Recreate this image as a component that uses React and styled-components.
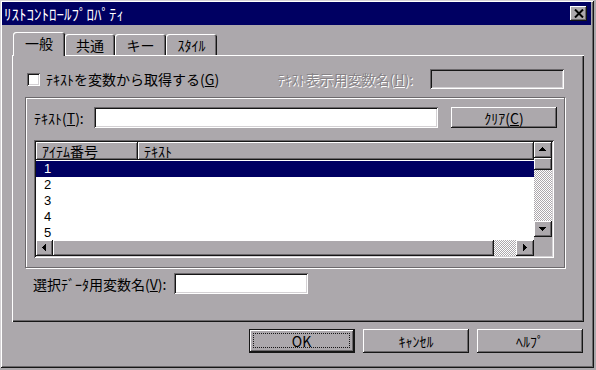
import React from 'react';
import styled, { createGlobalStyle } from 'styled-components';

const C = {
  face: '#aca8ac',
  light: '#d4d1d4',
  hi: '#ffffff',
  shadow: '#6b686b',
  dark: '#161616',
  navy: '#000062',
  grayText: '#878387',
};

const raised = `box-shadow: inset -1px -1px ${C.dark}, inset 1px 1px ${C.hi}, inset -2px -2px ${C.shadow};`;
const sunken = `box-shadow: inset 1px 1px ${C.shadow}, inset -1px -1px ${C.hi}, inset 2px 2px ${C.dark}, inset -2px -2px ${C.light};`;

const GlobalStyle = createGlobalStyle`
  html, body {
    margin: 0;
    padding: 0;
    background: ${C.face};
  }
  body {
    font-family: "Noto Sans CJK JP", "Noto Sans", sans-serif;
    font-size: 14px;
    color: #000;
  }
  u { text-underline-offset: 1px; }
`;

const Win = styled.div`
  width: 594px;
  height: 368px;
  box-sizing: border-box;
  padding: 2px 3px 3px 2px;
  background: ${C.face};
  box-shadow: inset 1px 1px ${C.light}, inset -1px -1px ${C.dark}, inset 2px 2px ${C.hi}, inset -2px -2px ${C.shadow};
  display: flex;
  flex-direction: column;
`;

const TitleBar = styled.div`
  height: 23px;
  background: ${C.navy};
  display: flex;
  align-items: center;
  justify-content: space-between;
  padding: 0 4px 0 2px;
`;

const Title = styled.span`
  color: #fff;
  font-size: 15px;
  line-height: 23px;
  white-space: nowrap;
`;

const CloseBtn = styled.div`
  width: 17px;
  height: 15px;
  background: ${C.face};
  ${raised}
  display: flex;
  align-items: center;
  justify-content: center;
`;

const Body = styled.div`
  flex: 1;
  display: flex;
  flex-direction: column;
  padding: 7px 7px 0 10px;
`;

const TabRow = styled.div`
  display: flex;
  align-items: flex-end;
  height: 24px;
  padding-left: 1px;
  position: relative;
  z-index: 1;
`;

const Tab = styled.div`
  width: ${p => p.$w}px;
  height: ${p => (p.$active ? 24 : 21)}px;
  margin-bottom: ${p => (p.$active ? 0 : 1)}px;
  box-sizing: border-box;
  background: ${C.face};
  border-radius: 3px 3px 0 0;
  box-shadow: inset 1px 1px ${C.hi}, inset -1px 0 ${C.dark}, inset -2px 0 ${C.shadow};
  display: flex;
  align-items: center;
  justify-content: center;
  padding-bottom: ${p => (p.$active ? 2 : 0)}px;
  font-size: 14px;
  white-space: nowrap;
`;

const Panel = styled.div`
  margin-top: -1px;
  height: 267px;
  box-sizing: border-box;
  background: ${C.face};
  box-shadow: inset 1px 1px ${C.hi}, inset -1px -1px ${C.dark}, inset -2px -2px ${C.shadow};
  padding: 14px 19px 0 13px;
  display: flex;
  flex-direction: column;
`;

const TopRow = styled.div`
  display: flex;
  align-items: center;
  height: 20px;
  padding: 0 1px 0 2px;
`;

const CheckLabel = styled.label`
  display: flex;
  align-items: center;
  gap: 6px;
  white-space: nowrap;
`;

const CheckBox = styled.span`
  width: 13px;
  height: 13px;
  flex: none;
  background: #fff;
  ${sunken}
`;

const DisabledGroup = styled.div`
  margin-left: auto;
  display: flex;
  align-items: center;
  gap: 17px;
`;

const DisabledText = styled.span`
  color: ${C.grayText};
  text-shadow: 1px 1px ${C.hi};
  white-space: nowrap;
`;

const Field = styled.div`
  width: ${p => p.$w}px;
  height: ${p => p.$h || 21}px;
  flex: none;
  background: ${p => (p.$disabled ? C.face : '#fff')};
  ${sunken}
`;

const GroupBox = styled.div`
  margin-top: 8px;
  height: 171px;
  box-sizing: border-box;
  border: 1px solid ${C.shadow};
  box-shadow: inset 1px 1px ${C.hi}, 1px 1px ${C.hi};
  padding: 9px 0 0 7px;
  display: flex;
  flex-direction: column;
`;

const FieldRow = styled.div`
  display: flex;
  align-items: center;
  height: 21px;
  padding-left: ${p => p.$pad || 0}px;
`;

const Label = styled.span`
  width: ${p => p.$w}px;
  flex: none;
  white-space: nowrap;
`;

const Button = styled.div`
  width: ${p => p.$w || 106}px;
  height: ${p => p.$h || 24}px;
  box-sizing: border-box;
  margin-left: ${p => p.$ml || 0}px;
  background: ${C.face};
  ${raised}
  display: flex;
  align-items: center;
  justify-content: center;
  white-space: nowrap;
  font-size: 14px;
`;

const DefaultButton = styled.div`
  width: 106px;
  height: 24px;
  box-sizing: border-box;
  border: 1px solid ${C.dark};
  background: ${C.face};
  box-shadow: inset -1px -1px ${C.dark}, inset 1px 1px ${C.hi}, inset -2px -2px ${C.shadow};
  padding: 3px 4px 4px 3px;
  display: flex;
`;

const FocusRect = styled.div`
  flex: 1;
  border: 1px dotted ${C.dark};
  display: flex;
  align-items: center;
  justify-content: center;
  font-size: 14px;
`;

const List = styled.div`
  margin: 12px 0 0 1px;
  width: 520px;
  height: 118px;
  box-sizing: border-box;
  padding: 2px;
  background: ${C.face};
  ${sunken}
  display: grid;
  grid-template-columns: 498px 18px;
  grid-template-rows: 98px 16px;
`;

const ListBody = styled.div`
  background: #fff;
  overflow: hidden;
`;

const HeaderRow = styled.div`
  display: flex;
  height: 18px;
`;

const HeaderCell = styled.div`
  width: ${p => (p.$w ? `${p.$w}px` : 'auto')};
  flex: ${p => (p.$w ? 'none' : 1)};
  box-sizing: border-box;
  background: ${C.face};
  ${raised}
  padding-left: 6px;
  line-height: 18px;
  white-space: nowrap;
`;

const Rows = styled.div`
  padding-top: 1px;
`;

const Row = styled.div`
  height: 16px;
  line-height: 16px;
  padding-left: 8px;
  font-family: "Liberation Sans", Arial, sans-serif;
  font-size: 13px;
  background: ${p => (p.$sel ? C.navy : 'transparent')};
  color: ${p => (p.$sel ? '#fff' : '#000')};
`;

const VCol = styled.div`
  grid-row: 1 / span 2;
  grid-column: 2;
  background: ${C.face};
`;

const VBar = styled.div`
  height: 95px;
  display: flex;
  flex-direction: column;
`;

const HBar = styled.div`
  grid-row: 2;
  grid-column: 1;
  display: flex;
`;

const Track = styled.div`
  flex: 1;
  display: flex;
  flex-direction: ${p => (p.$v ? 'column' : 'row')};
  background: repeating-conic-gradient(${C.hi} 0% 25%, ${C.face} 0% 50%) 0 0 / 2px 2px;
`;

const Thumb = styled.div`
  flex: none;
  width: ${p => (p.$w ? `${p.$w}px` : 'auto')};
  height: ${p => (p.$h ? `${p.$h}px` : 'auto')};
  background: ${C.face};
  ${raised}
`;

const ArrowBtn = styled.div`
  width: ${p => p.$w}px;
  height: ${p => p.$h}px;
  flex: none;
  box-sizing: border-box;
  background: ${C.face};
  ${raised}
  display: flex;
  align-items: center;
  justify-content: center;
  padding: 0 1px 1px 0;
`;

const BottomRow = styled(FieldRow)`
  margin-top: 5px;
`;

const ButtonRow = styled.div`
  margin-top: 7px;
  display: flex;
  justify-content: flex-end;
  gap: 8px;
  padding-right: 1px;
`;

const Arrow = ({ dir }) => {
  const rot = { up: 0, right: 90, down: 180, left: 270 }[dir];
  return (
    <svg width="7" height="7" viewBox="0 0 7 7" shapeRendering="crispEdges" style={{ transform: `rotate(${rot}deg)` }}>
      <rect x="3" y="1" width="1" height="1" fill="#000" />
      <rect x="2" y="2" width="3" height="1" fill="#000" />
      <rect x="1" y="3" width="5" height="1" fill="#000" />
      <rect x="0" y="4" width="7" height="1" fill="#000" />
    </svg>
  );
};

const CloseIcon = () => (
  <svg width="10" height="9" viewBox="0 0 10 9">
    <path d="M1 0.5 L9 8.5 M9 0.5 L1 8.5" stroke="#000" strokeWidth="2" />
  </svg>
);

const items = ['1', '2', '3', '4', '5'];

export default function App() {
  return (
    <>
      <GlobalStyle />
      <Win>
        <TitleBar>
          <Title>ﾘｽﾄｺﾝﾄﾛｰﾙﾌﾟﾛﾊﾟﾃｨ</Title>
          <CloseBtn><CloseIcon /></CloseBtn>
        </TitleBar>
        <Body>
          <TabRow>
            <Tab $w={52} $active>一般</Tab>
            <Tab $w={50}>共通</Tab>
            <Tab $w={51}>キー</Tab>
            <Tab $w={51}>ｽﾀｲﾙ</Tab>
          </TabRow>
          <Panel>
            <TopRow>
              <CheckLabel>
                <CheckBox />
                <span>ﾃｷｽﾄを変数から取得する(<u>G</u>)</span>
              </CheckLabel>
              <DisabledGroup>
                <DisabledText>ﾃｷｽﾄ表示用変数名(<u>H</u>):</DisabledText>
                <Field $w={134} $h={20} $disabled />
              </DisabledGroup>
            </TopRow>
            <GroupBox>
              <FieldRow $pad={1}>
                <Label $w={60}>ﾃｷｽﾄ(<u>T</u>):</Label>
                <Field $w={344} />
                <Button $ml={13} $h={21}>ｸﾘｱ(<u>C</u>)</Button>
              </FieldRow>
              <List>
                <ListBody>
                  <HeaderRow>
                    <HeaderCell $w={102}>ｱｲﾃﾑ番号</HeaderCell>
                    <HeaderCell>ﾃｷｽﾄ</HeaderCell>
                  </HeaderRow>
                  <Rows>
                    {items.map((n, i) => (
                      <Row key={n} $sel={i === 0}>{n}</Row>
                    ))}
                  </Rows>
                </ListBody>
                <VCol>
                  <VBar>
                    <ArrowBtn $w={18} $h={16}><Arrow dir="up" /></ArrowBtn>
                    <Track $v>
                      <Thumb $h={12} />
                    </Track>
                    <ArrowBtn $w={18} $h={16}><Arrow dir="down" /></ArrowBtn>
                  </VBar>
                </VCol>
                <HBar>
                  <ArrowBtn $w={17} $h={16}><Arrow dir="left" /></ArrowBtn>
                  <Track>
                    <Thumb $w={441} />
                  </Track>
                  <ArrowBtn $w={18} $h={16}><Arrow dir="right" /></ArrowBtn>
                </HBar>
              </List>
            </GroupBox>
            <BottomRow $pad={8}>
              <Label $w={141}>選択ﾃﾞｰﾀ用変数名(<u>V</u>):</Label>
              <Field $w={134} />
            </BottomRow>
          </Panel>
          <ButtonRow>
            <DefaultButton><FocusRect>OK</FocusRect></DefaultButton>
            <Button>ｷｬﾝｾﾙ</Button>
            <Button>ﾍﾙﾌﾟ</Button>
          </ButtonRow>
        </Body>
      </Win>
    </>
  );
}
